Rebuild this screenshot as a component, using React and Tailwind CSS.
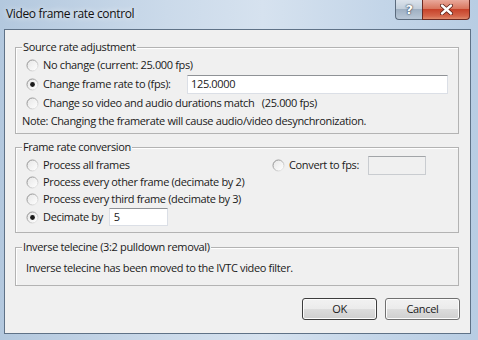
import React from "react";

const font = { fontFamily: '"Open Sans", "Noto Sans", sans-serif' };

function Radio({ checked }) {
  return (
    <svg width="13" height="13" viewBox="0 0 13 13" className="shrink-0">
      <defs>
        <linearGradient id="rs" x1="0" y1="0" x2="1" y2="1">
          <stop offset="0" stopColor="#7d7d7d" />
          <stop offset="0.55" stopColor="#b9b9b9" />
          <stop offset="1" stopColor="#f4f4f4" />
        </linearGradient>
        <linearGradient id="rf" x1="0" y1="0" x2="1" y2="1">
          <stop offset="0" stopColor="#e6e6e6" />
          <stop offset="1" stopColor="#ffffff" />
        </linearGradient>
      </defs>
      <circle cx="6.5" cy="6.5" r="5.5" fill="url(#rf)" stroke="url(#rs)" strokeWidth="1" />
      {checked && <circle cx="6.5" cy="6.5" r="2.4" fill="#1a1a1a" />}
    </svg>
  );
}

function Group({ title, className, children }) {
  return (
    <div className={"relative border border-[#b3b3b3] shadow-[inset_1px_1px_0_#ffffff] ml-[10px] w-[444px] " + className}>
      <span className="absolute left-[6px] top-[-9px] bg-[#f0f0f0] px-[1px] leading-[16px]">{title}</span>
      {children}
    </div>
  );
}

function Btn({ children, def }) {
  return (
    <div
      className={
        "w-[75px] h-[22px] flex items-center justify-center rounded-[3px] border bg-[linear-gradient(to_bottom,#f2f2f2_0%,#ebebeb_50%,#dddddd_50%,#cfcfcf_100%)] shadow-[inset_0_0_0_1px_#fcfcfc] " +
        (def ? "border-[#3d3d3d]" : "border-[#707070]")
      }
    >
      {children}
    </div>
  );
}

export default function App() {
  return (
    <div
      className="w-[478px] h-[340px] flex flex-col bg-[linear-gradient(to_right,#b3c8de,#cbdaea_35%,#d6e2ef_55%,#c3d5e8_80%,#b8cde3)] text-[11px] tracking-[-0.35px] text-[#1a1a1a] overflow-hidden"
      style={font}
    >
      <div className="h-[29px] flex items-start shrink-0">
        <span className="pl-[6px] pt-[6px] text-[12px] leading-[16px] text-[#111] [text-shadow:0_0_6px_#ffffff]">
          Video frame rate control
        </span>
        <div className="ml-auto mr-[8px] flex">
          <div className="w-[27px] h-[20px] rounded-bl-[4px] border border-[#5b6b7d] border-t-0 border-r-0 bg-[linear-gradient(to_bottom,#dbe3ec_0%,#c3cfdb_45%,#9fb0c2_50%,#b9c8d7_100%)] flex items-center justify-center">
            <span className="text-[13px] font-bold leading-none text-white [text-shadow:0_0_1px_#2b3a4c,0_0_2px_#2b3a4c]" style={{ fontFamily: '"DejaVu Sans", sans-serif' }}>?</span>
          </div>
          <div className="w-[48px] h-[20px] rounded-br-[4px] border border-[#6d2a22] border-t-0 bg-[linear-gradient(to_bottom,#e9a99b_0%,#d9775f_45%,#c7432b_50%,#d5664b_85%,#e08c6e_100%)] flex items-center justify-center">
            <svg width="13" height="11" viewBox="0 0 13 11">
              <path d="M2 1.5 L11 9.5 M11 1.5 L2 9.5" stroke="#5a1d14" strokeWidth="4" strokeLinecap="round" />
              <path d="M2 1.5 L11 9.5 M11 1.5 L2 9.5" stroke="#ffffff" strokeWidth="2.4" strokeLinecap="round" />
            </svg>
          </div>
        </div>
      </div>

      <div className="ml-[4px] mr-[7px] h-[305px] border border-[#5f7287] bg-[#f0f0f0] flex flex-col">
        <Group title="Source rate adjustment" className="mt-[17px] h-[87px] pt-[8px]">
          <div className="h-[18px] flex items-center pl-[10px] gap-[4px]">
            <Radio />
            <span>No change (current: 25.000 fps)</span>
          </div>
          <div className="h-[20px] flex items-center pl-[10px] gap-[4px]">
            <Radio checked />
            <span>Change frame rate to (fps):</span>
            <div className="ml-auto mr-[10px] w-[261px] h-[19px] bg-white border border-[#dbdfe6] border-t-[#8f9296] flex items-center pl-[3px]">
              125.0000
            </div>
          </div>
          <div className="h-[18px] flex items-center pl-[10px] gap-[4px]">
            <Radio />
            <span className="whitespace-pre">Change so video and audio durations match   (25.000 fps)</span>
          </div>
          <div className="h-[18px] flex items-center pl-[6px]">
            Note: Changing the framerate will cause audio/video desynchronization.
          </div>
        </Group>

        <Group title="Frame rate conversion" className="mt-[13px] h-[86px] pt-[9px] flex">
          <div className="w-[256px] pl-[10px] flex flex-col">
            <div className="h-[17px] flex items-center gap-[4px]">
              <Radio />
              <span>Process all frames</span>
            </div>
            <div className="h-[17px] flex items-center gap-[4px]">
              <Radio />
              <span>Process every other frame (decimate by 2)</span>
            </div>
            <div className="h-[17px] flex items-center gap-[4px]">
              <Radio />
              <span>Process every third frame (decimate by 3)</span>
            </div>
            <div className="h-[18px] flex items-center gap-[4px]">
              <Radio checked />
              <span>Decimate by</span>
              <div className="ml-[2px] w-[59px] h-[18px] bg-white border border-[#dbdfe6] border-t-[#8f9296] flex items-center pl-[4px]">
                5
              </div>
            </div>
          </div>
          <div className="h-[17px] flex items-center gap-[4px]">
            <Radio />
            <span>Convert to fps:</span>
            <div className="ml-[5px] w-[58px] h-[19px] bg-[#f0f0f0] border border-[#c9ccd0] border-t-[#a2a5a8]" />
          </div>
        </Group>

        <Group title="Inverse telecine (3:2 pulldown removal)" className="mt-[14px] h-[39px] pt-[11px]">
          <div className="h-[18px] flex items-center pl-[10px]">
            Inverse telecine has been moved to the IVTC video filter.
          </div>
        </Group>

        <div className="mt-[12px] ml-[297px] flex gap-[8px]">
          <Btn def>OK</Btn>
          <Btn>Cancel</Btn>
        </div>
      </div>
    </div>
  );
}
